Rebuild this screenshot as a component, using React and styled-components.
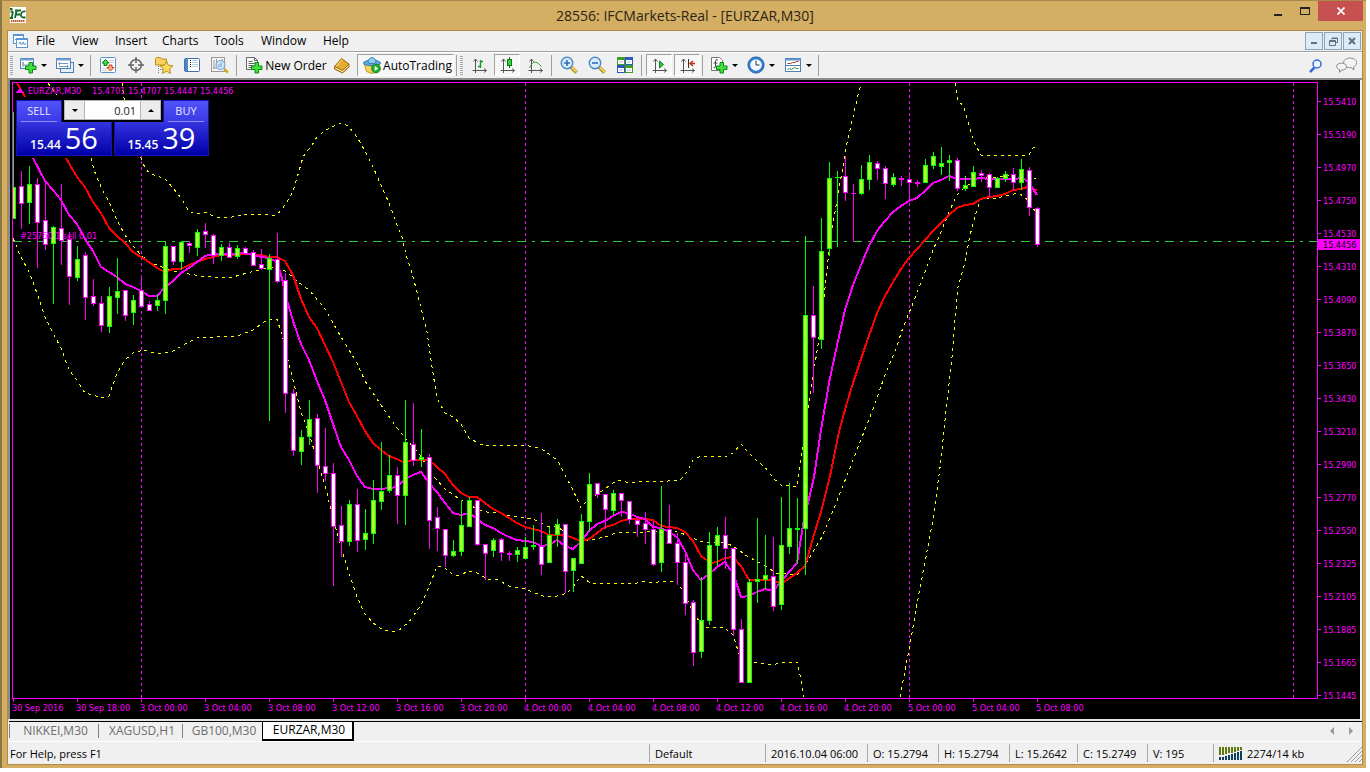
import React, { useState } from "react";
import styled, { createGlobalStyle } from "styled-components";

const GlobalStyle = createGlobalStyle`
  * { box-sizing: border-box; }
  body { margin: 0; background: #fff; }
  button, input { font: inherit; color: inherit; }
`;

const Desktop = styled.div`
  height: 100vh;
  padding: 0 4px 4px 0;
  display: flex;
  font-family: "Open Sans", "Noto Sans", sans-serif;
  font-size: 12px;
  color: #000;
`;

const AppWindow = styled.div`
  flex: 1;
  min-width: 0;
  display: flex;
  flex-direction: column;
  padding: 0 3px 3px 5px;
  background: #d3ae63;
  border-top: 1px solid #a98a4c;
  border-left: 2px solid #8d7646;
`;

const TitleBar = styled.header`
  height: 29px;
  flex: none;
  display: flex;
  align-items: flex-start;
`;

const AppIcon = styled.svg`
  margin: 6px 0 0 3px;
  flex: none;
`;

const Title = styled.h1`
  flex: 1;
  margin: 0;
  padding-left: 80px;
  text-align: center;
  font-size: 14px;
  font-weight: 400;
  line-height: 29px;
  color: #2b2414;
`;

const CaptionButton = styled.button`
  width: ${(p) => (p.$close ? 45 : 27)}px;
  height: 20px;
  padding: 0;
  border: 0;
  background: ${(p) => (p.$close ? "#c75050" : "transparent")};
  display: grid;
  place-items: center;
`;

const Client = styled.main`
  flex: 1;
  min-height: 0;
  display: flex;
  flex-direction: column;
  background: #f0f0f0;
  border: 1px solid #b08e4a;
`;

const MenuBar = styled.nav`
  height: 20px;
  flex: none;
  display: flex;
  align-items: center;
  padding: 0 1px 0 5px;
`;

const MenuItem = styled.button`
  border: 0;
  padding: 0;
  background: none;
  width: ${(p) => p.$width}px;
  text-align: left;
  line-height: 18px;
`;

const MenuIcon = styled.svg`
  margin-right: 8px;
`;

const Spacer = styled.div`
  flex: 1;
`;

const ChildButton = styled.button`
  width: 18px;
  height: 18px;
  margin-left: 1px;
  padding: 0;
  border: 1px solid #8fa3b5;
  background: #dcebf8;
  display: grid;
  place-items: center;
`;

const ToolBar = styled.div`
  height: 29px;
  flex: none;
  display: flex;
  align-items: center;
  border-top: 1px solid #a0a0a0;
  border-bottom: 2px solid #8c8c8c;
  padding-left: 2px;
  box-shadow: inset 0 1px 0 #fff;
`;

const Grip = styled.span`
  width: 3px;
  height: 19px;
  margin: 0 1px 0 ${(p) => p.$left || 0}px;
  background: repeating-linear-gradient(#a8a8a8 0 1px, #f0f0f0 1px 2px);
`;

const Tool = styled.button`
  width: ${(p) => p.$width || 28}px;
  height: 22px;
  margin-left: ${(p) => p.$gap || 0}px;
  padding: 0 0 0 ${(p) => (p.$label ? 4 : 0)}px;
  display: flex;
  align-items: center;
  justify-content: center;
  gap: ${(p) => (p.$drop ? 4 : 2)}px;
  white-space: nowrap;
  border: 1px solid transparent;
  ${(p) =>
    p.$pressed
      ? `
    border-color: #a0a0a0 #fff #fff #a0a0a0;
    background: #f7f7f7;
  `
      : "background: none;"}
`;

const Arrow = styled.i`
  border: 3px solid transparent;
  border-top-color: #000;
  border-bottom: 0;
`;

const Divider = styled.span`
  width: 1px;
  height: 21px;
  margin: 0 ${(p) => (p.$tight ? 1 : 3)}px 0 2px;
  background: #a0a0a0;
`;

const ChartPane = styled.section`
  flex: 1;
  min-height: 0;
  position: relative;
  margin: 0 2px 0 0;
  border-left: 2px solid #8c8c8c;
  background: #000;
`;

const ChartSvg = styled.svg`
  display: block;
  width: 100%;
  height: 100%;
  font-family: "DejaVu Sans Condensed", "DejaVu Sans", sans-serif;
  font-size: 9px;
`;

const TradePanel = styled.form`
  position: absolute;
  left: 6px;
  top: 20px;
  width: 193px;
  background: #000;
  color: #fff;
  font-size: 11px;
`;

const TradeTop = styled.div`
  display: flex;
  align-items: flex-start;
  justify-content: space-between;
`;

const SideButton = styled.button`
  width: 46px;
  height: 22px;
  padding: 0 4px;
  border: 1px solid #1414b4;
  border-bottom: 0;
  background: linear-gradient(#5252fa, #3a3ae6);
  color: #e8e8ff;
  line-height: 20px;
`;

const SideName = styled.span`
  display: block;
  border-bottom: 1px solid #8c8cff;
`;

const Spinner = styled.div`
  display: flex;
  width: 97px;
  height: 20px;
  border: 1px solid #b4b4b4;
  background: #fff;
`;

const SpinButton = styled.button`
  width: 19px;
  padding: 0;
  border: 0;
  background: #ececec;
  display: grid;
  place-items: center;
`;

const SpinArrow = styled.i`
  border: 3px solid transparent;
  ${(p) =>
    p.$up
      ? "border-bottom-color: #000; border-top: 0;"
      : "border-top-color: #000; border-bottom: 0;"}
`;

const VolumeInput = styled.input`
  flex: 1;
  min-width: 0;
  padding: 0 4px;
  border: 1px solid #b4b4b4;
  border-width: 0 1px;
  background: #fff;
  color: #1a1a1a;
  text-align: right;
  outline: 0;
`;

const Quotes = styled.div`
  display: flex;
  justify-content: space-between;
`;

const Quote = styled.button`
  width: ${(p) => p.$width}px;
  height: 34px;
  padding: 0;
  display: flex;
  align-items: baseline;
  justify-content: center;
  gap: 4px;
  border: 1px solid #1414b4;
  border-top: 0;
  background: linear-gradient(#3434e0, #0000a8);
  font-size: 12px;
  font-weight: 600;
  line-height: 32px;
`;

const Pips = styled.span`
  font-size: 29px;
  font-weight: 400;
`;

const TabBar = styled.div`
  height: 23px;
  flex: none;
  display: flex;
  align-items: flex-start;
  padding-left: 1px;
  border-top: 2px solid #e4e4e4;
  border-bottom: 1px solid #fff;
`;

const TabStrip = styled.div`
  flex: 1;
  display: flex;
  align-items: center;
  height: 19px;
  padding-right: 2px;
  border-top: 1px solid #000;
`;

const Tab = styled.button`
  width: ${(p) => p.$width}px;
  height: ${(p) => (p.$active ? 19 : 14)}px;
  padding: 0 0 0 3px;
  border: 0;
  border-left: 1px solid #808080;
  background: none;
  color: #6d6d6d;
  line-height: 14px;
  ${(p) =>
    p.$active &&
    `
    border: solid #000;
    border-width: 0 2px 2px 1px;
    background: #fff;
    color: #000;
  `}
`;

const ScrollButton = styled.button`
  width: 19px;
  height: 16px;
  padding: 0;
  border: 0;
  background: none;
  display: grid;
  place-items: center;
`;

const StatusBar = styled.footer`
  height: 22px;
  flex: none;
  display: flex;
  align-items: center;
  font-size: 11px;
`;

const StatusCell = styled.span`
  ${(p) => (p.$width ? `width: ${p.$width}px;` : "flex: 1;")}
  height: 18px;
  padding-left: ${(p) => (p.$width ? 5 : 2)}px;
  border-left: ${(p) => (p.$width ? "1px solid #a8a8a8" : "0")};
  display: flex;
  align-items: center;
  gap: 4px;
  white-space: nowrap;
`;

/* high, body top, body bottom, low, 1 when the bar closed up; 8px per bar */
const bars = [
  [112, 187, 219, 219, 1], [171, 186, 204, 229, 0], [166, 184, 203, 224, 1], [178, 184, 223, 268, 0],
  [181, 220, 245, 250, 0], [226, 227, 244, 304, 1], [184, 228, 241, 265, 0], [232, 239, 277, 305, 0],
  [246, 259, 278, 281, 1], [252, 255, 298, 320, 0], [279, 296, 304, 306, 0], [296, 303, 326, 332, 0],
  [287, 296, 327, 333, 1], [258, 291, 298, 314, 1], [290, 290, 316, 321, 0], [295, 300, 313, 325, 1],
  [275, 290, 307, 307, 0], [301, 304, 311, 311, 0], [294, 300, 306, 311, 1], [241, 246, 301, 314, 1],
  [246, 246, 262, 265, 0], [241, 242, 262, 270, 1], [241, 243, 246, 253, 0], [229, 232, 248, 256, 1],
  [223, 231, 235, 248, 0], [234, 235, 256, 264, 0], [244, 247, 256, 261, 1], [243, 247, 258, 258, 0],
  [245, 248, 257, 259, 1], [247, 248, 254, 255, 0], [250, 252, 266, 266, 0], [249, 264, 269, 270, 0],
  [254, 258, 270, 421, 1], [233, 259, 282, 283, 0], [273, 280, 394, 413, 0], [389, 393, 451, 456, 0],
  [430, 437, 452, 465, 1], [400, 419, 437, 445, 1], [414, 418, 466, 493, 0], [428, 466, 474, 481, 0],
  [463, 473, 527, 586, 0], [506, 525, 542, 557, 0], [500, 504, 542, 546, 1], [489, 504, 541, 552, 0],
  [509, 533, 540, 550, 1], [480, 500, 534, 544, 1], [442, 491, 502, 510, 1], [455, 475, 491, 493, 1],
  [467, 475, 496, 524, 0], [400, 442, 496, 525, 1], [403, 444, 461, 466, 0], [429, 457, 460, 467, 1],
  [454, 457, 521, 549, 0], [507, 517, 529, 551, 0], [529, 529, 556, 567, 0], [540, 551, 556, 557, 1],
  [500, 525, 552, 556, 1], [497, 500, 527, 527, 1], [500, 500, 545, 546, 0], [544, 544, 554, 580, 0],
  [538, 540, 551, 557, 1], [538, 539, 553, 561, 0], [551, 553, 555, 561, 0], [547, 550, 555, 562, 1],
  [537, 547, 559, 559, 1], [525, 545, 547, 550, 1], [513, 546, 565, 575, 0], [527, 535, 563, 563, 1],
  [519, 524, 535, 547, 1], [524, 524, 572, 593, 0], [558, 558, 571, 592, 1], [514, 521, 564, 564, 1],
  [473, 484, 522, 531, 1], [483, 483, 495, 498, 0], [494, 494, 510, 529, 0], [490, 493, 511, 515, 1],
  [493, 493, 501, 517, 0], [501, 501, 520, 524, 0], [519, 520, 525, 537, 0], [512, 523, 530, 544, 0],
  [521, 529, 565, 566, 0], [486, 529, 563, 572, 1], [505, 529, 544, 544, 0], [533, 543, 563, 585, 0],
  [555, 562, 604, 615, 0], [600, 602, 653, 666, 0], [577, 620, 652, 658, 1], [532, 545, 621, 625, 1],
  [527, 535, 546, 566, 1], [517, 535, 549, 569, 0], [548, 548, 630, 636, 0], [619, 629, 683, 683, 0],
  [579, 582, 683, 683, 1], [518, 579, 582, 603, 1], [535, 575, 580, 589, 1], [537, 576, 607, 611, 0],
  [497, 545, 605, 610, 1], [483, 528, 547, 554, 1], [498, 528, 530, 564, 1], [236, 315, 529, 575, 1],
  [286, 315, 338, 393, 0], [218, 251, 340, 349, 1], [162, 178, 249, 256, 1], [171, 177, 178, 247, 1],
  [156, 176, 193, 201, 0], [184, 193, 194, 242, 0], [165, 179, 194, 195, 1], [155, 162, 180, 190, 1],
  [161, 163, 169, 180, 0], [166, 168, 184, 199, 0], [173, 177, 185, 187, 1], [176, 178, 180, 186, 0],
  [172, 179, 183, 200, 0], [180, 182, 184, 187, 0], [159, 165, 183, 183, 1], [152, 156, 166, 169, 1],
  [147, 163, 167, 175, 1], [155, 160, 163, 181, 1], [158, 160, 189, 191, 0], [176, 185, 189, 191, 1],
  [166, 172, 187, 187, 1], [170, 173, 176, 182, 0], [173, 174, 188, 197, 0], [177, 178, 188, 188, 1],
  [171, 174, 179, 182, 1], [168, 174, 183, 190, 0], [159, 169, 183, 190, 1], [167, 170, 208, 216, 0],
  [207, 208, 245, 247, 0],
];

const fastMa =
  "33,158 45,181 53,190 61,200 69,215 77,224 85,239 93,251 101,267 109,272 117,277 125,284 133,287 141,291 149,296 157,296 165,287 173,281 181,273 189,268 197,262 205,256 213,254 229,254 245,253 253,255 261,257 269,258 277,262 282,278 285,293 293,321 301,344 309,360 317,381 325,400 333,424 341,447 349,460 357,476 365,487 373,489 381,489 389,488 397,487 405,479 413,475 421,472 429,483 437,492 445,503 453,513 461,515 469,513 477,519 485,525 493,528 501,533 509,537 517,540 525,541 533,542 541,546 549,545 557,540 565,546 573,549 581,542 589,531 597,524 605,521 613,516 621,512 629,513 637,517 645,519 653,527 661,528 669,532 677,537 685,551 693,570 701,580 709,574 717,567 725,562 733,573 741,597 749,596 757,592 765,589 773,591 781,582 789,572 797,563 805,513 808,503 814,477 821,430 829,383 836,350 845,310 853,285 861,265 869,246 877,231 885,221 893,212 901,206 909,201 917,198 925,191 933,183 941,180 949,176 957,179 973,179 981,178 989,179 1017,179 1022,177 1029,183 1037,195";

const slowMa =
  "66,158 77,177 85,187 93,202 101,213 109,228 117,236 125,243 133,252 141,257 149,262 157,268 165,272 173,269 181,269 189,265 197,262 205,259 213,257 221,255 237,255 245,254 261,255 269,257 277,257 285,261 293,275 301,299 309,317 317,328 325,345 333,362 341,382 349,402 357,416 365,431 373,443 381,450 389,456 397,459 403,462 413,460 429,460 437,467 445,474 453,485 461,493 469,497 477,497 485,503 493,509 501,513 509,518 517,523 525,527 533,529 541,531 549,535 565,535 573,538 581,541 589,539 597,533 605,527 613,525 621,521 629,519 645,519 653,520 661,526 669,527 677,528 685,532 693,541 701,556 711,563 717,562 725,558 733,557 741,566 749,580 773,580 777,582 784,582 797,573 805,566 813,538 821,512 830,476 839,432 846,406 854,380 864,350 877,313 885,296 893,282 901,269 909,258 917,249 925,240 933,231 941,223 949,215 957,208 965,205 973,204 981,199 989,197 997,196 1005,194 1013,190 1021,189 1027,187 1033,189 1037,190";

const bands = [
  "48,83 57,95",
  "91,158 94,170 101,187 109,202 117,220 125,235 133,246 141,255 149,262 157,265 173,271 189,274 200,276 213,277 233,277 247,273 263,269 273,267 280,268 288,273 297,281 310,291 325,309 341,337 357,363 365,381 381,405 397,428 407,440 420,455 433,476 445,489 461,500 477,509 487,512 498,513 510,516 527,518 535,520 547,526 558,527 567,534 577,540 590,540 605,537 613,534 623,532 637,533 647,532 677,531 690,537 703,542 723,542 733,546 747,556 767,567 776,573 787,574 798,574 807,562 822,537 839,496 855,455 873,409 885,375 897,347 901,333 909,313 917,293 925,272 933,250 941,232 949,212 957,195 965,187 970,184 981,177 1000,177 1017,175 1025,178 1036,179",
  "122,83 124,98 132,135 141,158 143,164 149,173 165,179 173,188 181,198 189,211 195,214 206,212 213,216 221,218 232,217 245,214 256,214 269,215 277,215 285,205 293,192 303,157 312,145 317,137 326,130 334,126 341,123 348,126 357,137 365,151 373,167 381,185 389,203 397,225 402,237 407,258 412,273 417,292 422,312 427,332 432,367 437,398 445,413 453,417 461,424 469,438 480,444 490,446 523,445 535,447 543,450 553,457 558,461 565,475 573,490 581,508 585,503 589,499 597,494 605,489 613,483 621,480 629,483 637,482 653,481 668,481 680,480 687,472 693,460 701,456 725,457 733,453 741,444 748,452 757,461 765,467 773,478 781,485 797,487 800,467 803,445 810,395 818,345 824,297 828,260 832,230 837,200 842,172 847,143 853,117 858,95 861,84",
  "955,83 958,100 964,107 968,122 973,140 981,155 1003,155 1015,156 1029,155 1033,148 1037,146",
  "13,238 20,255 29,272 37,293 45,317 53,333 61,348 69,370 77,380 85,393 93,395 101,398 109,396 117,373 125,360 133,353 143,350 158,354 173,351 187,343 197,338 213,337 237,336 253,330 267,320 277,319 282,335 288,360 293,380 301,412 309,433 317,460 325,485 333,518 341,547 349,573 357,597 365,614 373,623 383,630 393,632 398,631 409,622 421,605 429,587 437,566 445,568 453,575 460,575 469,571 477,573 487,579 498,580 509,586 525,589 535,593 543,596 557,596 567,593 573,587 581,576 589,582 597,584 613,583 621,584 637,583 645,581 653,583 663,581 677,581 685,595 693,612 703,627 717,628 723,627 733,635 741,660 757,663 773,665 781,662 797,662 800,675 804,697",
  "900,697 909,650 917,604 925,562 933,520 941,460 945,420 953,348 955,320 958,287 965,263 969,240 973,223 977,210 981,198 997,198 1005,196 1018,193 1025,197 1033,208 1036,212",
];

const prices = [
  "15.5410", "15.5190", "15.4970", "15.4750", "15.4530", "15.4310", "15.4090", "15.3870", "15.3650", "15.3430",
  "15.3210", "15.2990", "15.2770", "15.2550", "15.2325", "15.2105", "15.1885", "15.1665", "15.1445",
];

const times = [
  "30 Sep 2016", "30 Sep 18:00", "3 Oct 00:00", "3 Oct 04:00", "3 Oct 08:00", "3 Oct 12:00", "3 Oct 16:00",
  "3 Oct 20:00", "4 Oct 00:00", "4 Oct 04:00", "4 Oct 08:00", "4 Oct 12:00", "4 Oct 16:00", "4 Oct 20:00",
  "5 Oct 00:00", "5 Oct 04:00", "5 Oct 08:00",
];

const Candle = ({ x, bar }) => {
  const [high, top, bottom, low, up] = bar;
  const line = up ? "#0f0" : "#f0f";
  return (
    <g>
      <rect x={x} y={high} width="1" height={low - high} fill={line} />
      <rect x={x - 2} y={top} width="5" height={bottom - top} fill={line} />
      {bottom - top > 2 && (
        <rect x={x - 1} y={top + 1} width="3" height={bottom - top - 2} fill={up ? "#adff2f" : "#fff"} />
      )}
    </g>
  );
};

const Chart = () => (
  <ChartSvg viewBox="10 80 1350 639" preserveAspectRatio="xMinYMin meet" role="img" aria-label="EURZAR,M30 chart">
    <defs>
      <clipPath id="plot">
        <rect x="13" y="83" width="1304" height="615" />
      </clipPath>
    </defs>
    <g shapeRendering="crispEdges" clipPath="url(#plot)">
      {[141, 525, 909, 1293].map((x) => (
        <path key={x} d={`M${x + 0.5} 83V698`} stroke="#f0f" strokeDasharray="3 3" />
      ))}
      <path d="M13 241.5H1317" stroke="#32cd32" strokeDasharray="9 6 3 6" />
      <g fill="none">
        {bands.map((points) => (
          <polyline key={points} points={points} stroke="#ff0" strokeDasharray="3 4" />
        ))}
        <polyline points="17,83 25,97" stroke="#f00" strokeWidth="2" />
        <polyline points={slowMa} stroke="#f00" strokeWidth="2" />
        <polyline points={fastMa} stroke="#f0f" strokeWidth="2" />
      </g>
      {bars.map((bar, i) => (
        <Candle key={i} x={13 + 8 * i} bar={bar} />
      ))}
    </g>
    <g shapeRendering="crispEdges" stroke="#f0f" fill="none">
      <rect x="12.5" y="82.5" width="1305" height="616" />
      {prices.map((p, i) => (
        <path key={p} d={`M1318 ${101.5 + 33 * i}h3`} />
      ))}
      {times.map((t, i) => (
        <path key={t} d={`M${13.5 + 64 * i} 699v3`} />
      ))}
    </g>
    <g fill="#f0f">
      {prices.map((p, i) => (
        <text key={p} x="1323" y={105 + 33 * i}>{p}</text>
      ))}
      {times.map((t, i) => (
        <text key={t} x={12 + 64 * i} y="711">{t}</text>
      ))}
      <path d="M15.5 93h9l-4.500-5z" />
      <text x="28" y="94">EURZAR,M30</text>
      {["15.4701", "15.4707", "15.4447", "15.4456"].map((p, i) => (
        <text key={p} x={92 + 36 * i} y="94">{p}</text>
      ))}
      <text x="20" y="239">#25760  1 sell 0.01</text>
    </g>
    <rect x="1318" y="239" width="42" height="11" fill="#f0f" />
    <text x="1323" y="248" fill="#000">15.4456</text>
  </ChartSvg>
);

const Icon = ({ size = 18, children }) => (
  <svg width={size} height={size} viewBox="0 0 18 18" fill="none" aria-hidden="true">
    {children}
  </svg>
);

const Plus = ({ x = 7, y = 6 }) => (
  <path
    transform={`translate(${x} ${y})`}
    d="M4 0.500h3.500v3.500h3.500v3.500h-3.500v3.500h-3.500v-3.500h-3.500v-3.500h3.500z"
    fill="#3fe03f"
    stroke="#0a8a12"
  />
);

const NewChartIcon = () => (
  <Icon>
    <rect x="1.500" y="2.500" width="13" height="10" fill="#fff" stroke="#4f7fb5" />
    <path d="M1 3.500h14" stroke="#6d9fd4" strokeWidth="2" />
    <path d="M4 6v5M3 7h2M3 9h9" stroke="#7c97b5" />
    <Plus x={6} y={6} />
  </Icon>
);

const ProfilesIcon = () => (
  <Icon>
    <rect x="4.500" y="6.500" width="13" height="10" fill="#e5effa" stroke="#4f7fb5" />
    <rect x="0.500" y="2.500" width="14" height="10" fill="#fff" stroke="#4f7fb5" />
    <path d="M0 3.500h15" stroke="#6d9fd4" strokeWidth="2" />
    <path d="M3 7.500h9M4 6l-1.500 1.500L4 9M3 10.500h9M11 9l1.500 1.500L11 12" stroke="#7c97b5" />
  </Icon>
);

const MarketWatchIcon = () => (
  <Icon>
    <rect x="1.500" y="1.500" width="15" height="15" rx="1" fill="#fbfdff" stroke="#5b93cf" />
    <path d="M10 4.500h5M10 6.500h5M3 12.500h5M3 14.500h5" stroke="#d0d0d0" />
    <path d="M6.500 3.500l3.500 3.500h-2v2.500h-3v-2.500h-2z" fill="#3fe03f" stroke="#0a7d12" />
    <path d="M11.500 15l-3.500-3.500h2v-2.500h3v2.500h2z" fill="#ffb48c" stroke="#d0400e" />
  </Icon>
);

const CrosshairIcon = () => (
  <Icon>
    <circle cx="9" cy="9" r="5.500" stroke="#666" strokeWidth="1.500" />
    <path d="M9 1v6M9 11v6M1 9h6M11 9h6" stroke="#666" strokeWidth="1.500" />
  </Icon>
);

const NavigatorIcon = () => (
  <Icon>
    <path d="M0.500 2.500l1-1h4l1 1.500h5v6h-11z" fill="#f7d25c" stroke="#b98d1f" />
    <path d="M3.500 10v7M5 13.500h3" stroke="#777" strokeDasharray="1 1" />
    <path d="M11.500 5l2 4.200 4.500.6-3.300 3.100.8 4.500-4-2.200-4 2.200.8-4.500L5 9.800l4.500-.6z" fill="#fbd859" stroke="#b98d1f" />
  </Icon>
);

const TerminalIcon = () => (
  <Icon>
    <rect x="1.500" y="2.500" width="15" height="13" rx="1" fill="#fff" stroke="#3f6fae" />
    <path d="M2 3h3v12H2z" fill="#4f86c6" />
    <path d="M7 6.500h1M7 8.500h1M7 10.500h1M7 4.500h1" stroke="#111" />
    <path d="M9 4.500h6M9 6.500h6M9 8.500h6M9 10.500h6" stroke="#b9cbe2" />
  </Icon>
);

const TesterIcon = () => (
  <Icon>
    <rect x="0.500" y="1.500" width="13" height="14" fill="#f4f4f4" stroke="#999" />
    <path d="M3 4v9M5.500 3v5M11.500 3v6M2 12h5" stroke="#9a9a9a" />
    <path d="M13 13l4 3.500" stroke="#d8a526" strokeWidth="2.500" />
    <circle cx="9.500" cy="9" r="4.500" fill="#cbe5fa" stroke="#6b9fd2" />
    <path d="M8 11v-3M10 11V6.500" stroke="#7da5c8" />
  </Icon>
);

const NewOrderIcon = () => (
  <Icon>
    <path d="M1.500 1.500h8l3 3v9h-11z" fill="#fff" stroke="#666" />
    <path d="M9.500 1.500v3h3M3.500 5.500h4M3.500 7.500h7M3.500 9.500h5M3.500 11.500h4" stroke="#666" />
    <Plus x={6} y={6} />
  </Icon>
);

const BookIcon = () => (
  <Icon>
    <path d="M1.500 10.500l7-8 7.500 5.500v3l-6.500 6-8-4z" fill="#e5ac32" stroke="#96680f" />
    <path d="M1.500 10.500l8 4 6.500-6.500" stroke="#96680f" />
    <path d="M2.500 12l7 3.500 6-6" stroke="#fdf0c0" />
    <path d="M3.500 10l5.500-6.500" stroke="#f9dd86" />
  </Icon>
);

const AutoTradingIcon = () => (
  <Icon>
    <path d="M1 7.500l8 2 8-2-2.500 8-5.500 2-5.500-2z" fill="#f6d55a" stroke="#c79a22" />
    <ellipse cx="9" cy="7" rx="8.500" ry="2.800" fill="#5fa9dc" stroke="#377fb5" />
    <path d="M5 6.500c0-6.500 8-6.500 8 0-2 1.500-6 1.500-8 0z" fill="#8accf0" stroke="#377fb5" />
    <circle cx="13" cy="12.500" r="4.300" fill="#22b12c" stroke="#0f8318" />
    <path d="M11.700 10l3.500 2.500-3.500 2.500z" fill="#fff" />
  </Icon>
);

const Axes = ({ children }) => (
  <Icon>
    <path d="M5.500 3v14M2.500 14.500h14" stroke="#555" />
    <path d="M3.500 5.500l2-2.500 2 2.500M14 12.500l2.500 2-2.500 2" stroke="#555" />
    {children}
  </Icon>
);

const ZoomIcon = ({ plus }) => (
  <Icon>
    <path d="M11 11l5.500 5.500" stroke="#a8831d" strokeWidth="3.500" />
    <path d="M11.500 11l5 5" stroke="#f4cf58" strokeWidth="2" />
    <circle cx="7" cy="7" r="5.700" fill="#d8edfc" stroke="#4a87c6" strokeWidth="1.400" />
    <path d={plus ? "M4 7h6M7 4v6" : "M4 7h6"} stroke="#2f6fb5" strokeWidth="1.600" />
  </Icon>
);

const TileIcon = () => (
  <Icon>
    <path d="M1 1h8v8H1zM9 9h8v8H9z" fill="#3f9e22" />
    <path d="M9 1h8v8H9zM1 9h8v8H1z" fill="#2d55c4" />
    <path d="M2 4h6v4H2zM10 4h6v4h-6zM2 12h6v4H2zM10 12h6v4h-6z" fill="#fff" />
    <path d="M3 6h4M11 6h4M3 14h4M11 14h4" stroke="#a9c0dd" />
  </Icon>
);

const IndicatorsIcon = () => (
  <Icon>
    <path d="M1.500 1.500h8l3 3v10h-11z" fill="#fff" stroke="#777" />
    <path d="M8 4c-2-1-2.500 0-2.500 2v4c0 2-1 2-2 1.500M3.500 7h4" stroke="#444" />
    <Plus x={6} y={6} />
  </Icon>
);

const ClockIcon = () => (
  <Icon>
    <circle cx="9" cy="9" r="7" fill="#f4f9ff" stroke="#2f7fd0" strokeWidth="2.500" />
    <circle cx="9" cy="9" r="8.200" stroke="#1b4c93" strokeWidth="0.600" />
    <path d="M9 4.500V9h3.500" stroke="#333" />
  </Icon>
);

const TemplateIcon = () => (
  <Icon>
    <rect x="1.500" y="2.500" width="15" height="13" fill="#fff" stroke="#4f7fb5" />
    <path d="M1 3.500h16" stroke="#5b93cf" strokeWidth="2" />
    <path d="M2 9.500h14" stroke="#4f7fb5" />
    <path d="M3.500 7.500h3l2-1h2l2-1h2" stroke="#a33a1c" />
    <path d="M3.500 13.500l2-1 2 1 3-2 2 1h2" stroke="#2c8a3a" />
  </Icon>
);

const SearchIcon = () => (
  <Icon>
    <path d="M6.500 11.500l-4.500 4.500" stroke="#3a6bd8" strokeWidth="2.500" />
    <circle cx="9" cy="8" r="4" fill="#eef5ff" stroke="#3a6bd8" strokeWidth="1.500" />
  </Icon>
);

const ChatIcon = () => (
  <svg width="22" height="18" viewBox="0 0 22 18" fill="#f3f3f6" stroke="#8b8b90" aria-hidden="true">
    <path d="M7.500 7c0-6.500 13-6.500 13-.5 0 2.500-1.500 4-3 4.500l.5 3-3-2.500c-4 .5-7.500-1.500-7.500-4.500z" />
    <path d="M0.500 10.500c0-4.500 10-4.500 10 0 0 2.500-2 3.500-5 3.500l-2 2.500v-3c-1.500-.5-3-1.500-3-3z" />
  </svg>
);

const menus = [["File", 36], ["View", 43], ["Insert", 47], ["Charts", 52], ["Tools", 47], ["Window", 62], ["Help", 40]];

const tabs = [["NIKKEI,M30", 89], ["XAGUSD,H1", 84], ["GB100,M30", 80], ["EURZAR,M30", 92]];

const cells = [
  ["Default", 116], ["2016.10.04 06:00", 102], ["O: 15.2794", 71], ["H: 15.2794", 71], ["L: 15.2642", 68],
  ["C: 15.2749", 70], ["V: 195", 66],
];

/* upper and lower bar heights of the connection meter */
const traffic = [[8, 3], [8, 3], [7, 4], [6, 5], [6, 6], [5, 7], [4, 8], [3, 9]];

export default function App() {
  const [volume, setVolume] = useState("0.01");
  const step = (d) => setVolume((v) => Math.max(0.01, Number(v) + d).toFixed(2));

  return (
    <>
      <GlobalStyle />
      <Desktop>
        <AppWindow>
          <TitleBar>
            <AppIcon width="16" height="16" viewBox="0 0 16 16">
              <rect width="16" height="16" fill="#fff" />
              <path d="M0 2h2.500M3 4.500L1.500 11M0.500 4.500H3M0 11h3M5 3.500h6M6.500 4L5 11M6 7.500h4M15.500 4.500c-5-1.500-6.500 6.500-1.500 6h1.500" fill="none" stroke="#14672f" strokeWidth="1.800" />
              <path d="M1 14h14" stroke="#c4572c" strokeWidth="2" strokeDasharray="1.500 0.500" />
            </AppIcon>
            <Title>28556: IFCMarkets-Real - [EURZAR,M30]</Title>
            <CaptionButton aria-label="Minimize">
              <svg width="10" height="10"><path d="M1 8h8v2H1z" fill="#222" /></svg>
            </CaptionButton>
            <CaptionButton aria-label="Maximize">
              <svg width="10" height="8"><path d="M0 0h10v8H0zM1 2v5h8V2z" fillRule="evenodd" fill="#222" /></svg>
            </CaptionButton>
            <CaptionButton $close aria-label="Close">
              <svg width="8" height="8"><path d="M0.500 0.500l7 7M7.500 0.500l-7 7" stroke="#fff" strokeWidth="1.700" /></svg>
            </CaptionButton>
          </TitleBar>

          <Client>
            <MenuBar>
              <MenuIcon width="15" height="15" viewBox="0 0 15 15" fill="#fff" stroke="#5b93cf">
                <rect x="0.500" y="0.500" width="10" height="9" />
                <path d="M1 1.500h9M2 6l2-2 1.500 2" />
                <rect x="3.500" y="4.500" width="11" height="9" />
                <path d="M4 5.500h10M5.500 10l1.500-2 1.500 3 1.500-3 1.500 3 1.500-2" fill="none" />
              </MenuIcon>
              {menus.map(([name, width]) => (
                <MenuItem key={name} $width={width}>{name}</MenuItem>
              ))}
              <Spacer />
              <ChildButton aria-label="Minimize chart">
                <svg width="8" height="8"><path d="M1 5h6v2H1z" fill="#5f7282" /></svg>
              </ChildButton>
              <ChildButton aria-label="Restore chart">
                <svg width="9" height="9" fill="none" stroke="#5f7282">
                  <path d="M3 2.500V1h5.500v4.500H7M3 1.500h5M0.500 3.500h6v5h-6zM1 4.500h5" />
                </svg>
              </ChildButton>
              <ChildButton aria-label="Close chart">
                <svg width="8" height="8"><path d="M1 1l6 6M7 1l-6 6" stroke="#5f7282" strokeWidth="2" /></svg>
              </ChildButton>
            </MenuBar>

            <ToolBar role="toolbar">
              <Grip />
              <Tool $width={37} $drop aria-label="New chart"><NewChartIcon /><Arrow /></Tool>
              <Tool $width={37} $drop aria-label="Profiles"><ProfilesIcon /><Arrow /></Tool>
              <Divider />
              <Tool aria-label="Market Watch"><MarketWatchIcon /></Tool>
              <Tool aria-label="Data Window"><CrosshairIcon /></Tool>
              <Tool aria-label="Navigator"><NavigatorIcon /></Tool>
              <Tool aria-label="Terminal"><TerminalIcon /></Tool>
              <Tool aria-label="Strategy Tester"><TesterIcon /></Tool>
              <Divider />
              <Tool $width={88} $label><NewOrderIcon />New Order</Tool>
              <Tool aria-label="MetaEditor"><BookIcon /></Tool>
              <Tool $width={97} $gap={1} $label $pressed><AutoTradingIcon />AutoTrading</Tool>
              <Divider $tight />
              <Grip $left={2} />
              <Tool $gap={1} aria-label="Bar chart">
                <Axes><path d="M10.500 4v8M8 10.500h2.500M10.500 5.500H13" stroke="#159a2e" strokeWidth="1.400" /></Axes>
              </Tool>
              <Tool $width={26} $gap={1} $pressed aria-label="Candlesticks">
                <Axes><path d="M11.500 1v11" stroke="#0c7a1c" /><rect x="9.500" y="3.500" width="4" height="6" fill="#2ed13c" stroke="#0c7a1c" /></Axes>
              </Tool>
              <Tool $gap={1} aria-label="Line chart">
                <Axes><path d="M3.500 12c3-7 6-8 12-1.500" stroke="#2f9e3c" /></Axes>
              </Tool>
              <Divider />
              <Tool aria-label="Zoom In"><ZoomIcon plus /></Tool>
              <Tool aria-label="Zoom Out"><ZoomIcon /></Tool>
              <Tool aria-label="Tile Windows"><TileIcon /></Tool>
              <Divider />
              <Tool $width={26} $gap={1} $pressed aria-label="Auto Scroll">
                <Axes><path d="M9.500 5l4 3.500-4 3.500z" fill="#2ed13c" stroke="#0c7a1c" /></Axes>
              </Tool>
              <Tool $width={26} $gap={2} $pressed aria-label="Chart Shift">
                <Axes><path d="M10.500 3v9" stroke="#333" /><path d="M17 7.500h-4M15 5l-3 2.500 3 2.500" stroke="#b7331a" strokeWidth="1.500" /></Axes>
              </Tool>
              <Divider $tight />
              <Tool $width={37} $gap={1} $drop aria-label="Indicators"><IndicatorsIcon /><Arrow /></Tool>
              <Tool $width={37} $drop aria-label="Periods"><ClockIcon /><Arrow /></Tool>
              <Tool $width={37} $drop aria-label="Templates"><TemplateIcon /><Arrow /></Tool>
              <Divider $tight />
              <Spacer />
              <Tool $width={30} aria-label="Search"><SearchIcon /></Tool>
              <Tool $width={30} aria-label="Chat"><ChatIcon /></Tool>
            </ToolBar>

            <ChartPane>
              <Chart />
              <TradePanel onSubmit={(e) => e.preventDefault()}>
                <TradeTop>
                  <SideButton type="button"><SideName>SELL</SideName></SideButton>
                  <Spinner>
                    <SpinButton type="button" aria-label="Decrease volume" onClick={() => step(-0.01)}><SpinArrow /></SpinButton>
                    <VolumeInput aria-label="Volume" value={volume} onChange={(e) => setVolume(e.target.value)} />
                    <SpinButton type="button" aria-label="Increase volume" onClick={() => step(0.01)}><SpinArrow $up /></SpinButton>
                  </Spinner>
                  <SideButton type="button"><SideName>BUY</SideName></SideButton>
                </TradeTop>
                <Quotes>
                  <Quote type="button" $width={96}>15.44<Pips>56</Pips></Quote>
                  <Quote type="button" $width={95}>15.45<Pips>39</Pips></Quote>
                </Quotes>
              </TradePanel>
            </ChartPane>

            <TabBar>
              <TabStrip role="tablist">
                {tabs.map(([name, width], i) => (
                  <Tab key={name} role="tab" $width={width} $active={i === 3} aria-selected={i === 3}>{name}</Tab>
                ))}
                <Spacer />
                <ScrollButton aria-label="Scroll left">
                  <svg width="4" height="8"><path d="M4 0v8L0 4z" fill="#9a9a9a" /></svg>
                </ScrollButton>
                <ScrollButton aria-label="Scroll right">
                  <svg width="4" height="8"><path d="M0 0v8l4-4z" fill="#9a9a9a" /></svg>
                </ScrollButton>
              </TabStrip>
            </TabBar>

            <StatusBar>
              <StatusCell>For Help, press F1</StatusCell>
              {cells.map(([text, width]) => (
                <StatusCell key={text} $width={width}>{text}</StatusCell>
              ))}
              <StatusCell $width={133}>
                <svg width="24" height="13" aria-hidden="true">
                  {traffic.map(([top, bottom], i) => (
                    <g key={i}>
                      <rect x={i * 3} y="0" width="2" height={top} fill="#5f7a0c" />
                      <rect x={i * 3} y={13 - bottom} width="2" height={bottom} fill="#0e3f5c" />
                    </g>
                  ))}
                </svg>
                2274/14 kb
              </StatusCell>
              <svg width="16" height="18" viewBox="0 0 16 18" stroke="#9a9a9a" aria-hidden="true">
                <path d="M1 18L16 3M5 18L16 7M9 18l7-7M13 18l3-3" />
              </svg>
            </StatusBar>
          </Client>
        </AppWindow>
      </Desktop>
    </>
  );
}
